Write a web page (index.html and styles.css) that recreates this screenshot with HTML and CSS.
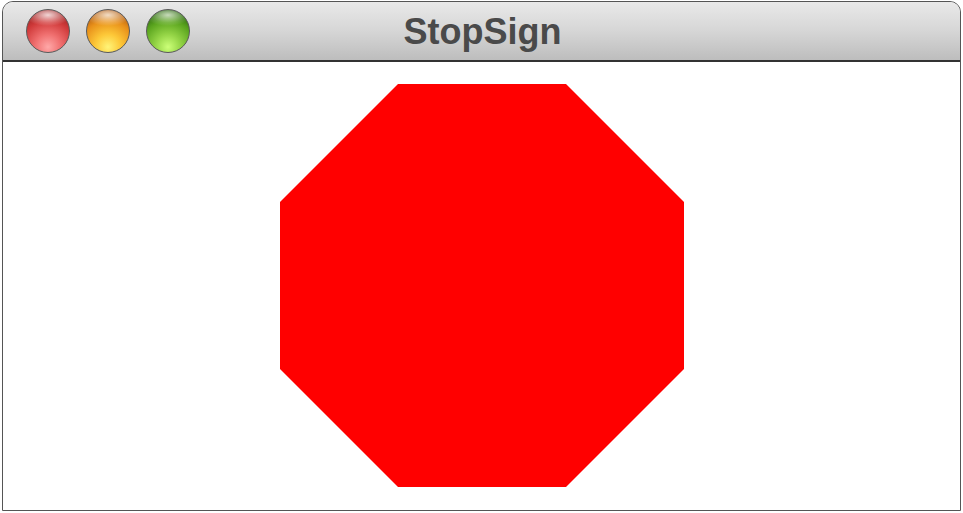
FILE: index.html
```
<!DOCTYPE html>
<html>
<head>
<meta charset="utf-8">
<link rel="stylesheet" href="styles.css">
</head>
<body>
<div class="window">
  <div class="titlebar">
    <div class="lights">
      <span class="light red"></span>
      <span class="light yellow"></span>
      <span class="light green"></span>
    </div>
    <div class="title">StopSign</div>
  </div>
  <div class="content">
    <svg class="sign" width="404" height="403" viewBox="0 0 404 403">
      <polygon points="118,0 286,0 404,118 404,285 286,403 118,403 0,285 0,118" fill="#ff0000"/>
    </svg>
  </div>
</div>
</body>
</html>
```
FILE: styles.css
```
html, body {
  margin: 0;
  padding: 0;
  background: #ffffff;
}
.window {
  box-sizing: border-box;
  margin: 1px 0 0 2px;
  width: 959px;
  height: 510px;
  border: 1px solid #555555;
  border-radius: 11px 11px 0 0;
  overflow: hidden;
  display: flex;
  flex-direction: column;
  background: #ffffff;
}
.titlebar {
  position: relative;
  height: 58px;
  flex: none;
  border-bottom: 2px solid #333333;
  background: linear-gradient(to bottom, #e9e9e9 0%, #d6d6d6 50%, #bdbdbd 100%);
  display: flex;
  align-items: center;
  justify-content: center;
}
.lights {
  position: absolute;
  left: 23px;
  top: 7px;
  display: flex;
  gap: 16px;
}
.light {
  display: block;
  width: 44px;
  height: 44px;
  box-sizing: border-box;
  border-radius: 50%;
  border: 1px solid #5a5a5a;
}
.red {
  background:
    radial-gradient(ellipse 56% 26% at 50% 12%, rgba(255,255,255,0.8) 0%, rgba(255,255,255,0.2) 70%, rgba(255,255,255,0) 100%),
    radial-gradient(circle at 50% 88%, #ffa8a8 0%, #f07070 30%, #d03a3a 62%, #a02424 85%, #702020 100%);
}
.yellow {
  background:
    radial-gradient(ellipse 56% 26% at 50% 12%, rgba(255,255,255,0.75) 0%, rgba(255,255,255,0.2) 70%, rgba(255,255,255,0) 100%),
    radial-gradient(circle at 50% 88%, #fff478 0%, #fdc838 30%, #e8901a 62%, #b05c12 85%, #6e3a10 100%);
}
.green {
  background:
    radial-gradient(ellipse 56% 26% at 50% 12%, rgba(255,255,255,0.7) 0%, rgba(255,255,255,0.15) 70%, rgba(255,255,255,0) 100%),
    radial-gradient(circle at 50% 88%, #ccff78 0%, #94d446 30%, #5aa41e 62%, #2e6a12 85%, #173a0c 100%);
}
.title {
  font-family: "Liberation Sans", Arial, sans-serif;
  font-weight: bold;
  font-size: 36px;
  color: #4a4a4a;
  margin-left: 2px;
  margin-top: 2px;
}
.content {
  flex: 1;
  display: flex;
  align-items: center;
  justify-content: center;
}
.sign {
  display: block;
  margin: -2px 0 0 1px;
}
```
